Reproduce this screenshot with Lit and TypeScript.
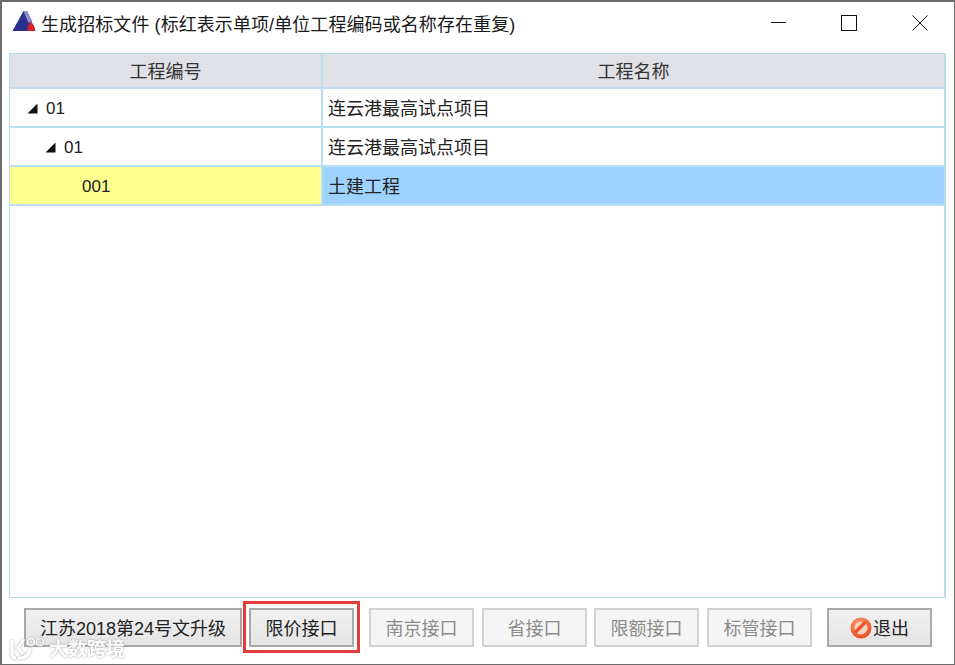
import { LitElement, html, css } from "lit";
import { customElement } from "lit/decorators.js";

const caret = html`<svg class="caret" width="11" height="11" viewBox="0 0 11 11"><path d="M10.500 0.500V10.500H0.500Z" fill="#111"/></svg>`;

@customElement("app-root")
export class AppRoot extends LitElement {
  static styles = css`
    :host {
      display: block;
      font-family: "Liberation Sans", "Noto Sans CJK SC", sans-serif;
      color: #222;
    }
    .win {
      position: relative;
      box-sizing: border-box;
      width: 955px;
      height: 665px;
      background: #fff;
      border: 1px solid #6b6b6b;
      border-left-width: 2px;
      border-top-width: 2px;
      display: flex;
      flex-direction: column;
      overflow: hidden;
    }
    .title {
      height: 51px;
      flex: none;
      display: flex;
      align-items: center;
      padding: 0 0 10px 10px;
      box-sizing: border-box;
      font-size: 18px;
      color: #1a1a1a;
    }
    .logo { flex: none; margin: 0 5px 2px 0; }
    .title-text { flex: 1; white-space: nowrap; letter-spacing: 0.08px; }
    .ctl { display: flex; align-items: center; margin-right: 26px; gap: 55px; }
    .ctl svg { display: block; }
    .grid {
      flex: none;
      margin: 0 7px;
      width: 937px;
      height: 545px;
      box-sizing: border-box;
      border: 1px solid #b9dcec;
      border-right-width: 2px;
    }
    .row {
      display: grid;
      grid-template-columns: 311px 1fr;
      height: 39px;
      box-sizing: border-box;
      border-bottom: 2px solid #b9e0f2;
      font-size: 18px;
    }
    .row.head {
      height: 35px;
      background: #dfe1e6;
      border-bottom: 2px solid #c0dcec;
      color: #333;
    }
    .cell {
      display: flex;
      align-items: center;
      min-width: 0;
      box-sizing: border-box;
      padding: 0 0 2px 5px;
      border-left: 2px solid #b9e0f2;
      white-space: nowrap;
    }
    .cell:first-child { border-left: 0; padding-left: 0; }
    .head .cell { justify-content: center; padding-left: 0; }
    .num { font-size: 17px; padding: 2px 0 0; }
    .l0 { padding-left: 17px !important; }
    .l1 { padding-left: 35px !important; }
    .l2 { padding-left: 72px !important; }
    .caret { margin-right: 8px; flex: none; }
    .sel .cell:first-child { background: #ffff8f; }
    .sel .cell:last-child { background: #9fd3ff; }
    .bar {
      flex: none;
      display: flex;
      margin-top: 10px;
      padding-left: 22px;
      height: 39px;
    }
    .btn {
      box-sizing: border-box;
      height: 39px;
      width: 105px;
      margin-right: 8px;
      padding-bottom: 2px;
      display: flex;
      align-items: center;
      justify-content: center;
      border: 2px solid #a9a9a9;
      background: linear-gradient(#f1f1f1, #e4e4e4);
      font-size: 18px;
      color: #222;
      white-space: nowrap;
    }
    .btn.off {
      border-color: #d2d2d2;
      background: #f5f5f5;
      color: #8a8a8a;
    }
    .btn.wide { width: 218px; margin-right: 7px; }
    .btn.hl { margin-right: 15px; }
    .btn.exit { margin-left: 7px; margin-right: 0; }
    .btn.gap7 { margin-right: 7px; }
    .exit svg { margin: 2px 1px 0 0; flex: none; }
    .redbox {
      position: absolute;
      left: 241px;
      top: 599px;
      width: 117px;
      height: 52px;
      box-sizing: border-box;
      border: 3px solid #e23c3c;
      pointer-events: none;
    }
    .mark {
      position: absolute;
      left: 7px;
      top: 632px;
      display: flex;
      align-items: center;
      gap: 2px;
      color: #fff;
      font-size: 19px;
      font-weight: 700;
      filter: drop-shadow(0 0 1px #9a9a9a);
      opacity: 0.9;
      white-space: nowrap;
      pointer-events: none;
    }
  `;

  render() {
    return html`
      <div class="win">
        <div class="title">
          <svg class="logo" width="24" height="21" viewBox="0 0 24 21">
            <path d="M11.500 0 L0.500 20 H16 Q15.500 14 20 10.500 L15 0Z" fill="#2b2f8f"/>
            <path d="M11.500 0 L15 0 L20 10 L16.500 12 Z" fill="#8f92c8"/>
            <path d="M15.500 20 Q15 14 19 11 Q22 13 23.500 20Z" fill="#d8202e"/>
          </svg>
          <span class="title-text">生成招标文件 (标红表示单项/单位工程编码或名称存在重复)</span>
          <div class="ctl">
            <svg width="15" height="15" viewBox="0 0 15 15"><path d="M0 7.500H15" stroke="#111" stroke-width="1"/></svg>
            <svg width="16" height="16" viewBox="0 0 16 16"><rect x="0.500" y="0.500" width="15" height="15" fill="none" stroke="#111"/></svg>
            <svg width="16" height="16" viewBox="0 0 16 16"><path d="M0.500 0.500L15.500 15.500M15.500 0.500L0.500 15.500" stroke="#111" fill="none"/></svg>
          </div>
        </div>
        <div class="grid">
          <div class="row head"><div class="cell">工程编号</div><div class="cell">工程名称</div></div>
          <div class="row"><div class="cell num l0">${caret}01</div><div class="cell">连云港最高试点项目</div></div>
          <div class="row"><div class="cell num l1">${caret}01</div><div class="cell">连云港最高试点项目</div></div>
          <div class="row sel"><div class="cell num l2">001</div><div class="cell">土建工程</div></div>
        </div>
        <div class="bar">
          <div class="btn wide">江苏2018第24号文升级</div>
          <div class="btn hl">限价接口</div>
          <div class="btn off">南京接口</div>
          <div class="btn off gap7">省接口</div>
          <div class="btn off">限额接口</div>
          <div class="btn off">标管接口</div>
          <div class="btn exit">
            <svg width="22" height="22" viewBox="0 0 22 22">
              <defs><radialGradient id="g" cx="0.4" cy="0.3" r="0.8"><stop offset="0" stop-color="#ff9a6a"/><stop offset="1" stop-color="#e2451c"/></radialGradient></defs>
              <circle cx="11" cy="11" r="10.500" fill="url(#g)"/>
              <circle cx="11" cy="11" r="6.500" fill="#f6d3c4"/>
              <path d="M5 15.500L15.500 5" stroke="#e8562a" stroke-width="3.500"/>
            </svg>退出
          </div>
        </div>
        <div class="redbox"></div>
        <div class="mark">
          <svg width="38" height="26" viewBox="0 0 38 26" fill="none" stroke="#fff">
            <path d="M3 5V19Q3 23 7 23" stroke-width="3"/>
            <path d="M15 4L9 13L14 19" stroke-width="3"/>
            <path d="M9 23Q20 24 21 13" stroke-width="3"/>
            <circle cx="22" cy="7" r="3.500" stroke-width="1.500"/>
            <circle cx="31" cy="7" r="3.500" stroke-width="1.500"/>
          </svg>
          <span>大数跨境</span>
        </div>
      </div>
    `;
  }
}
